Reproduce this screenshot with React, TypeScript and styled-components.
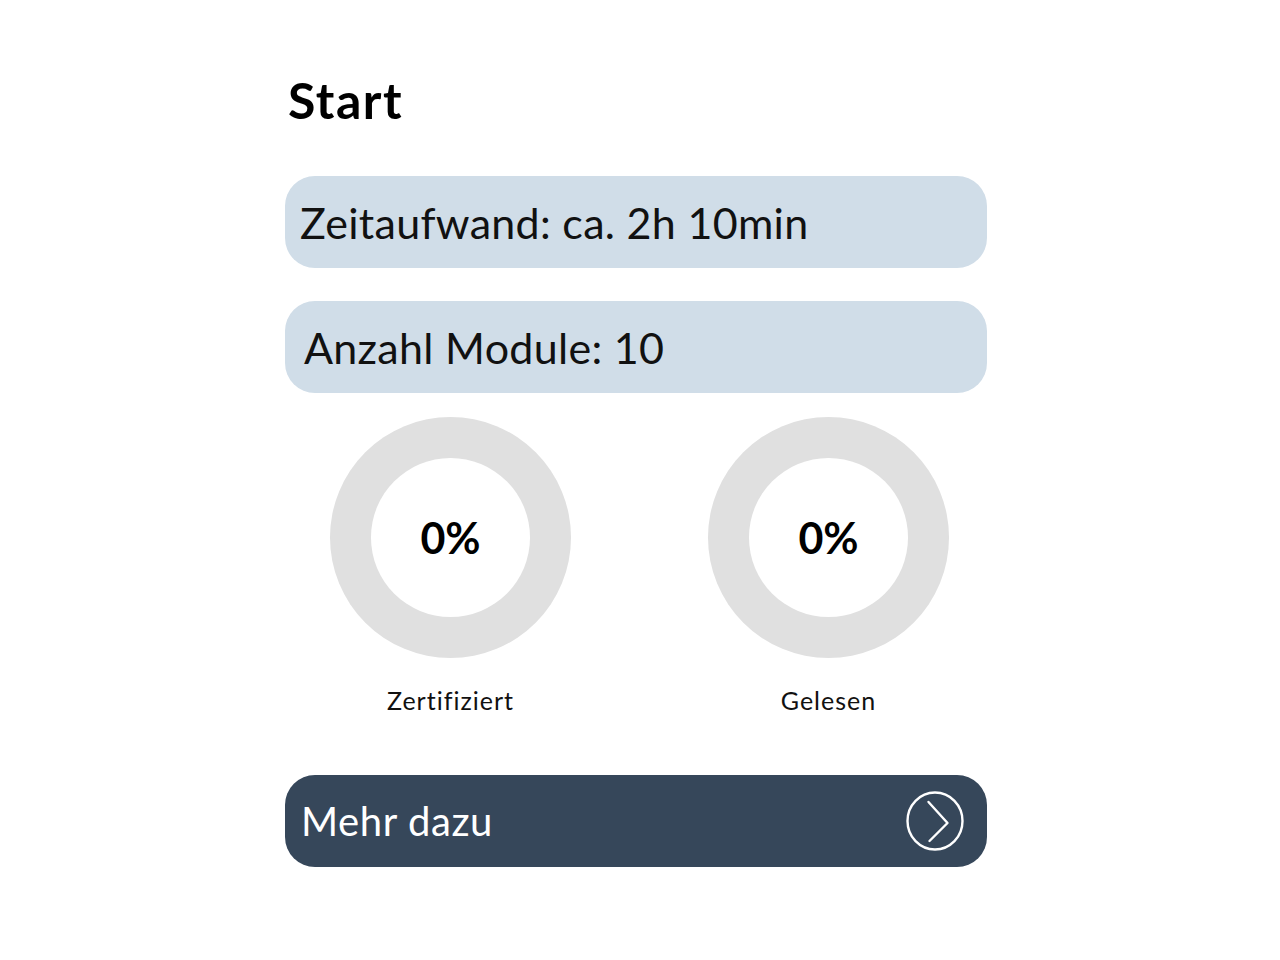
import React from 'react'
import styled, { createGlobalStyle } from 'styled-components'

const Global = createGlobalStyle`
  body {
    margin: 0;
    background: #ffffff;
    font-family: Lato, "Noto Sans", sans-serif;
    color: #111;
  }
`

const Page = styled.div`
  width: 702px;
  margin-left: 285px;
  padding-top: 72px;
  display: flex;
  flex-direction: column;
`

const Title = styled.h1`
  margin: 0 0 48px 3px;
  font-size: 50px;
  line-height: 56px;
  font-weight: 700;
  letter-spacing: 1.5px;
  color: #000;
`

const InfoPill = styled.div<{ $indent: number }>`
  height: 92px;
  border-radius: 30px;
  background: #d0dde8;
  display: flex;
  align-items: center;
  padding-left: ${(p) => p.$indent}px;
  font-size: 43px;
  letter-spacing: 0.3px;
  color: #111;
  margin-bottom: 33px;
`

const Stats = styled.div`
  display: flex;
  justify-content: space-between;
  padding: 0 38px 0 45px;
  margin-top: -9px;
`

const Stat = styled.div`
  display: flex;
  flex-direction: column;
  align-items: center;
`

const Ring = styled.div`
  width: 241px;
  height: 241px;
  border-radius: 50%;
  background: #e0e0e0;
  display: flex;
  align-items: center;
  justify-content: center;
`

const RingInner = styled.div`
  width: 159px;
  height: 159px;
  border-radius: 50%;
  background: #fff;
  display: flex;
  align-items: center;
  justify-content: center;
  font-size: 43px;
  font-weight: 700;
  color: #000;
`

const StatLabel = styled.div`
  margin-top: 27px;
  font-size: 25px;
  letter-spacing: 1px;
`

const MoreButton = styled.button`
  margin-top: 60px;
  height: 92px;
  border: none;
  border-radius: 30px;
  background: #36475a;
  color: #fff;
  display: flex;
  align-items: center;
  justify-content: space-between;
  padding: 0 22px 0 16px;
  font-family: inherit;
  font-size: 40px;
  letter-spacing: 0.6px;
  cursor: pointer;
`

const Arrow = () => (
  <svg width="60" height="62" viewBox="0 0 60 62" fill="none" stroke="#fff" strokeWidth="2.4" strokeLinecap="round" strokeLinejoin="round">
    <ellipse cx="30" cy="31" rx="27.5" ry="28.5" />
    <path d="M23.5 12 L42.5 33 L24.5 51" />
  </svg>
)

const App = () => {
  return (
    <>
      <Global />
      <Page>
        <Title>Start</Title>
        <InfoPill $indent={15}>Zeitaufwand: ca. 2h 10min</InfoPill>
        <InfoPill $indent={19}>Anzahl Module: 10</InfoPill>
        <Stats>
          <Stat>
            <Ring><RingInner>0%</RingInner></Ring>
            <StatLabel>Zertifiziert</StatLabel>
          </Stat>
          <Stat>
            <Ring><RingInner>0%</RingInner></Ring>
            <StatLabel>Gelesen</StatLabel>
          </Stat>
        </Stats>
        <MoreButton>
          Mehr dazu
          <Arrow />
        </MoreButton>
      </Page>
    </>
  )
}

export default App
